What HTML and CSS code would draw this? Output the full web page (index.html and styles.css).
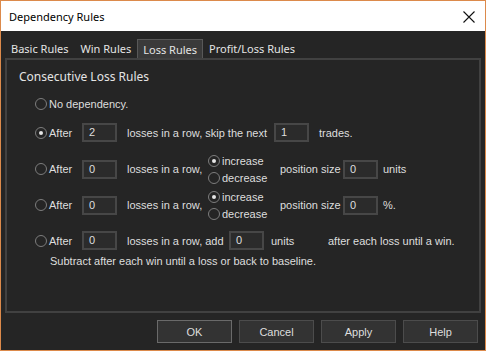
FILE: index.html
```html
<!DOCTYPE html>
<html lang="en">
<head>
    <meta charset="UTF-8">
    <title>Dependency Rules</title>
    <link rel="stylesheet" href="styles.css">
</head>
<body>
    <div class="window">
        <div class="titlebar">
            <span class="title">Dependency Rules</span>
            <svg class="close" width="12" height="12" viewBox="0 0 12 12">
                <path d="M0.5 0.5 L11.5 11.5 M11.5 0.5 L0.5 11.5" stroke="#111" stroke-width="1.1" fill="none"/>
            </svg>
        </div>
        <div class="content">
            <div class="tabs">
                <span class="tab">Basic Rules</span>
                <span class="tab">Win Rules</span>
                <span class="tab active">Loss Rules</span>
                <span class="tab">Profit/Loss Rules</span>
            </div>
            <div class="panel">
                <h3>Consecutive Loss Rules</h3>

                <div class="rule rule-simple">
                    <span class="radio"></span><span>No dependency.</span>
                </div>

                <div class="rule rule-skip">
                    <span class="opt"><span class="radio checked"></span>After</span>
                    <span class="field">2</span>
                    <span class="lbl lbl-skip">losses in a row, skip the next</span>
                    <span class="field">1</span>
                    <span class="tail">trades.</span>
                </div>

                <div class="rule rule-tall">
                    <span class="opt"><span class="radio"></span>After</span>
                    <span class="field">0</span>
                    <span class="lbl lbl-row">losses in a row,</span>
                    <span class="choice">
                        <span class="sub"><span class="radio checked"></span>increase</span>
                        <span class="sub"><span class="radio"></span>decrease</span>
                    </span>
                    <span class="lbl lbl-size">position size</span>
                    <span class="field">0</span>
                    <span class="tail">units</span>
                </div>

                <div class="rule rule-tall">
                    <span class="opt"><span class="radio"></span>After</span>
                    <span class="field">0</span>
                    <span class="lbl lbl-row">losses in a row,</span>
                    <span class="choice">
                        <span class="sub"><span class="radio checked"></span>increase</span>
                        <span class="sub"><span class="radio"></span>decrease</span>
                    </span>
                    <span class="lbl lbl-size">position size</span>
                    <span class="field">0</span>
                    <span class="tail">%.</span>
                </div>

                <div class="rule rule-last">
                    <span class="opt"><span class="radio"></span>After</span>
                    <span class="field">0</span>
                    <span class="lbl lbl-add">losses in a row, add</span>
                    <span class="field">0</span>
                    <span class="lbl lbl-units">units</span>
                    <span>after each loss until a win.</span>
                </div>
                <div class="note">Subtract after each win until a loss or back to baseline.</div>
            </div>
            <div class="buttons">
                <button class="btn default">OK</button>
                <button class="btn">Cancel</button>
                <button class="btn">Apply</button>
                <button class="btn">Help</button>
            </div>
        </div>
    </div>
</body>
</html>
```

FILE: styles.css
```css
html, body { margin: 0; padding: 0; background: #252525; }
body { font-family: "Liberation Sans", Arial, sans-serif; font-size: 11px; color: #dedede; white-space: nowrap; }

.window { width: 486px; height: 351px; box-sizing: border-box; border: 1px solid #dc8a4b; display: flex; flex-direction: column; }

.titlebar { height: 30px; background: #fff; display: flex; align-items: center; justify-content: space-between; padding: 0 10px 0 8px; }
.title { font-family: "Noto Sans", sans-serif; font-size: 11px; color: #000; }
.close { margin-top: 1px; }

.content { flex: 1; background: #252525; padding: 0 4px 0 4px; display: flex; flex-direction: column; }

.tabs { display: flex; align-items: flex-end; height: 27px; }
.tab { font-family: "Noto Sans", sans-serif; font-size: 11px; padding: 0 6px; height: 18px; line-height: 17px; color: #e4e4e4; box-sizing: border-box; }
.tab.active { height: 19px; line-height: 19px; background: #3a3a3a; border: 1px solid #585858; border-bottom: none; padding: 0 5px; }

.panel { height: 255px; box-sizing: border-box; border: 2px solid #414141; padding: 9px 12px; }
.panel h3 { margin: 0; font-family: "Noto Sans", sans-serif; font-weight: normal; font-size: 12px; line-height: 16px; color: #e4e4e4; }

.radio { display: inline-block; width: 12px; height: 12px; box-sizing: border-box; border: 1px solid #7d7d7d; border-radius: 50%; background: #252525; position: relative; margin-right: 2px; flex: none; }
.radio.checked::after { content: ""; position: absolute; left: 3px; top: 3px; width: 4px; height: 4px; border-radius: 50%; background: #e6e6e6; }

.rule { display: flex; align-items: center; margin-left: 16px; height: 19px; margin-top: 9px; }
.rule-simple { height: 16px; margin-top: 11px; }
.rule-skip { margin-top: 11px; }
.rule-tall { height: 36px; margin-top: 9px; }
.rule-tall + .rule-tall { margin-top: 0; }
.rule-last { margin-top: 8px; }
.rule > span { flex: none; }

.opt { display: flex; align-items: center; width: 47px; }
.field { width: 35px; height: 19px; box-sizing: border-box; border: 2px solid #474747; background: #2b2b2b; padding-left: 5px; line-height: 15px; }
.lbl { margin-left: 10px; }
.lbl-skip { width: 147px; }
.lbl-row { width: 81px; }
.lbl-size { width: 63px; margin-left: 0; }
.lbl-add { width: 102px; }
.lbl-units { width: 57px; margin-left: 7px; }
.tail { margin-left: 5px; }
.rule-skip .tail { margin-left: 10px; }

.choice { display: flex; flex-direction: column; width: 72px; }
.sub { display: flex; align-items: center; height: 17px; }

.note { margin-left: 31px; margin-top: 4px; line-height: 14px; }

.buttons { display: flex; justify-content: flex-end; gap: 7px; margin-top: 7px; padding-right: 3px; }
.btn { width: 75px; height: 23px; background: #333; border: 1px solid #4c4c4c; color: #dedede; font-family: "Liberation Sans", Arial, sans-serif; font-size: 11px; padding: 0; }
.btn.default { border-color: #6a6a6a; }
```
